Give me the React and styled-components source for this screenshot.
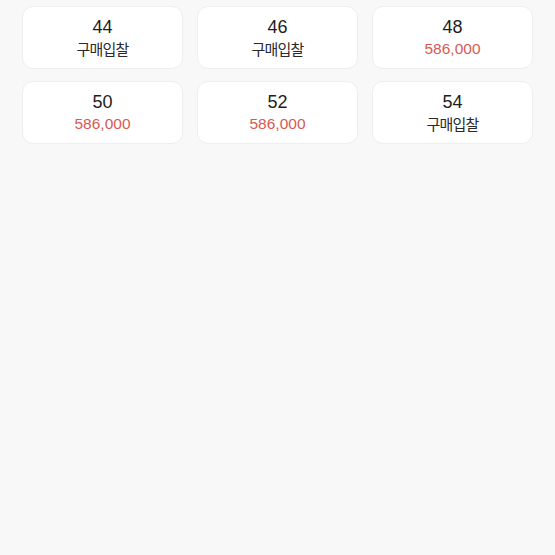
import React from "react";
import styled, { createGlobalStyle } from "styled-components";

const Global = createGlobalStyle`
  html, body { margin: 0; padding: 0; background: #f8f8f8; }
  body { font-family: "Liberation Sans", "Noto Sans CJK KR", sans-serif; }
`;

const Page = styled.div`
  min-height: 555px;
  background: #f8f8f8;
  padding: 6px 22px 0;
  box-sizing: border-box;
`;

const Grid = styled.div`
  display: grid;
  grid-template-columns: repeat(3, 161px);
  column-gap: 14px;
  row-gap: 12px;
`;

const Card = styled.div`
  height: 63px;
  box-sizing: border-box;
  background: #ffffff;
  border: 1px solid #eeeeee;
  border-radius: 11px;
  display: flex;
  flex-direction: column;
  align-items: center;
  justify-content: center;
  gap: 1px;
`;

const Size = styled.div`
  font-size: 18px;
  line-height: 21px;
  color: #1e1e1e;
`;

const Sub = styled.div`
  font-family: "Noto Sans CJK KR", sans-serif;
  font-size: 15px;
  letter-spacing: -0.8px;
  line-height: 19px;
  color: #2a2a2a;
`;

const Price = styled.div`
  font-family: "Liberation Sans", sans-serif;
  font-size: 15.5px;
  line-height: 19px;
  color: #d85a54;
`;

const items = [
  { size: "44" },
  { size: "46" },
  { size: "48", price: "586,000" },
  { size: "50", price: "586,000" },
  { size: "52", price: "586,000" },
  { size: "54" },
];

export default function App() {
  return (
    <>
      <Global />
      <Page>
        <Grid>
          {items.map((it) => (
            <Card key={it.size}>
              <Size>{it.size}</Size>
              {it.price ? <Price>{it.price}</Price> : <Sub>구매입찰</Sub>}
            </Card>
          ))}
        </Grid>
      </Page>
    </>
  );
}
